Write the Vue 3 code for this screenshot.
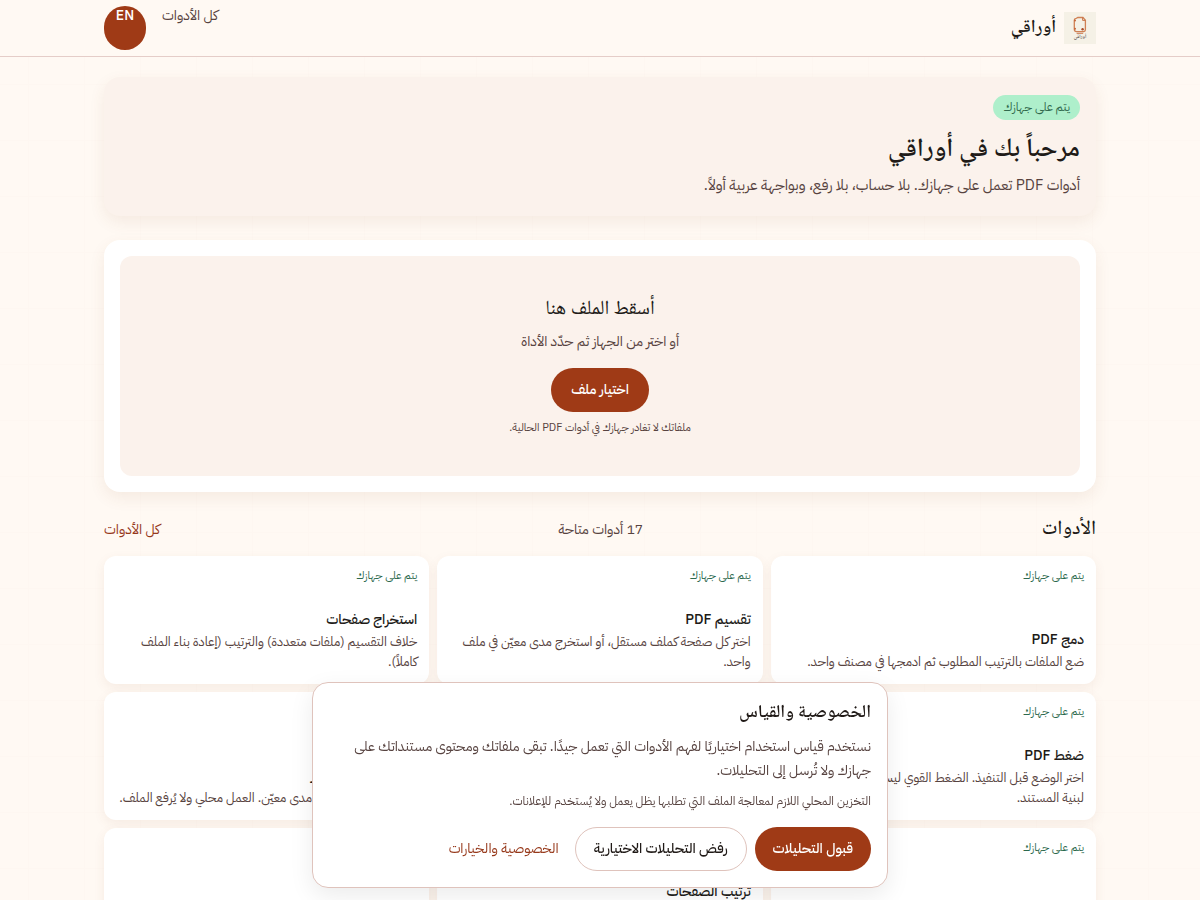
<script setup>
const local = 'يتم على جهازك'
const tools = [
  { title: 'دمج PDF', text: 'ضع الملفات بالترتيب المطلوب ثم ادمجها في مصنف واحد.' },
  { title: 'تقسيم PDF', text: 'اختر كل صفحة كملف مستقل، أو استخرج مدى معيّن في ملف\nواحد.' },
  { title: 'استخراج صفحات', text: 'خلاف التقسيم (ملفات متعددة) والترتيب (إعادة بناء الملف\nكاملاً).' },
  { title: 'ضغط PDF', text: 'اختر الوضع قبل التنفيذ. الضغط القوي ليس مناسباً دائماً\nلبنية المستند.' },
  { title: 'تدوير الصفحات', text: 'دوّر كل الصفحات أو صفحات محددة.' },
  { title: 'تحويل PDF إلى صور', text: 'كل الصفحات كاملة أو مدى معيّن. العمل محلي ولا يُرفع الملف.' },
  { title: 'صور إلى PDF', text: 'اجمع الصور في ملف واحد.' },
  { title: 'ترتيب الصفحات', text: 'أعد ترتيب صفحات الملف كما تريد\nثم احفظه.' },
  { title: 'حذف صفحات', text: 'احذف الصفحات غير المطلوبة.' }
]
</script>

<template>
  <div class="page" dir="rtl" lang="ar">
    <header class="top">
      <div class="wrap bar">
        <a class="brand" href="#">
          <svg class="logo" viewBox="0 0 32 32" aria-hidden="true">
            <rect width="32" height="32" fill="#f5f1e6" />
            <path d="M19 5.5h-5.2c-.8 0-1 .7-1.6.8-1.3.1-1.9.7-1.9 1.8v9.2c0 1.6.7 2.3 2.2 2.3h7.2c1.1 0 1.7-.6 1.7-1.8V8.2z" fill="none" stroke="#d08154" stroke-width="1.3" />
            <path d="M18.6 5.3v3.1h3M12.6 21.3h6.6" fill="none" stroke="#c9774c" stroke-width="1" />
            <circle cx="18.6" cy="17.3" r="1.2" fill="#a94a28" />
            <circle cx="11" cy="8.5" r="1" fill="#c46537" />
            <circle cx="11" cy="16.8" r="1" fill="#c46537" />
            <text x="16" y="26" text-anchor="middle" font-size="5" font-weight="600" fill="#554e49">أوراقي</text>
          </svg>
          <span>أوراقي</span>
        </a>
        <nav class="nav">
          <a class="navlink" href="#tools">كل الأدوات</a>
          <button class="lang" type="button" lang="en">EN</button>
        </nav>
      </div>
    </header>

    <main class="wrap main">
      <section class="hero">
        <span class="badge">{{ local }}</span>
        <h1>مرحباً بك في أوراقي</h1>
        <p>أدوات PDF تعمل على جهازك. بلا حساب، بلا رفع، وبواجهة عربية أولاً.</p>
      </section>

      <section class="upload">
        <div class="drop">
          <h2>أسقط الملف هنا</h2>
          <p>أو اختر من الجهاز ثم حدّد الأداة</p>
          <button class="primary pick" type="button">اختيار ملف</button>
          <small>ملفاتك لا تغادر جهازك في أدوات PDF الحالية.</small>
        </div>
      </section>

      <section id="tools">
        <div class="heading">
          <h2>الأدوات</h2>
          <span>17 أدوات متاحة</span>
          <a href="#tools">كل الأدوات</a>
        </div>
        <div class="grid">
          <a v-for="tool in tools" :key="tool.title" class="card" href="#">
            <span class="local">{{ local }}</span>
            <h3>{{ tool.title }}</h3>
            <p>{{ tool.text }}</p>
          </a>
        </div>
      </section>
    </main>

    <section class="consent" role="dialog" aria-labelledby="consent-title">
      <h2 id="consent-title">الخصوصية والقياس</h2>
      <p>نستخدم قياس استخدام اختياريًا لفهم الأدوات التي تعمل جيدًا. تبقى ملفاتك ومحتوى مستنداتك على جهازك ولا تُرسل إلى التحليلات.</p>
      <small>التخزين المحلي اللازم لمعالجة الملف التي تطلبها يظل يعمل ولا يُستخدم للإعلانات.</small>
      <div class="actions">
        <button class="primary" type="button">قبول التحليلات</button>
        <button class="outline" type="button">رفض التحليلات الاختيارية</button>
        <a href="#">الخصوصية والخيارات</a>
      </div>
    </section>
  </div>
</template>

<style>
html, body { overflow: hidden; height: 100%; }
</style>

<style scoped>
* { box-sizing: border-box; }
.page {
  height: 100vh;
  overflow: hidden;
  color: #201a17;
  font-family: "IBM Plex Sans Arabic", "Noto Sans Arabic", Roboto, sans-serif;
  font-size: 14px;
  line-height: 20px;
  background-color: #fff9f3;
  background-image:
    repeating-linear-gradient(90deg, transparent 0 28px, #fef7f1 28px 29px, transparent 29px 56px),
    repeating-linear-gradient(180deg, transparent 0 28px, #fef7f1 28px 29px, transparent 29px 56px);
}
h1, h2, h3, p { margin: 0; font-weight: 500; }
h1, h2, .brand span { font-family: "Noto Naskh Arabic", "DejaVu Sans", serif; }
p { font-weight: 400; }
a { color: #96381a; text-decoration: none; }
button { font: inherit; cursor: pointer; }
.wrap { max-width: 1024px; margin: 0 auto; padding: 0 16px; }
.top { background: #fff9f3; border-bottom: 1px solid #e5cdc8; }
.bar { display: flex; align-items: center; justify-content: space-between; height: 56px; }
.brand { display: flex; align-items: center; gap: 8px; color: #201a17; font-size: 18px; line-height: 28px; font-weight: 600; }
.logo { width: 32px; height: 32px; display: block; font-family: "Noto Naskh Arabic", serif; }
.nav { display: flex; gap: 16px; }
.navlink { color: #574340; height: 44px; }
.lang { display: flex; justify-content: center; align-items: flex-start; width: 42px; height: 44px; border: 0; border-radius: 22px; padding: 0; background: #9f3a16; color: #fff; font-weight: 500; }
.main { display: flex; flex-direction: column; gap: 24px; padding-top: 20px; }
.hero { padding: 18px 16px; border-radius: 16px; background: #fbf2ec; box-shadow: 0 6px 16px #8c503016; }
.badge { display: inline-block; height: 25px; padding: 0 10px; border-radius: 13px; background: #aeefcb; color: #31694d; font-size: 12px; line-height: 24px; vertical-align: top; }
.hero h1 { margin-top: 8px; font-size: 26px; line-height: 44px; font-weight: 600; }
.hero p { color: #574340; font-size: 15px; line-height: 26px; }
.upload { padding: 16px; border-radius: 16px; background: #fff; box-shadow: 0 6px 16px #8c503016; }
.drop { display: flex; flex-direction: column; align-items: center; min-height: 220px; padding: 36px 16px; border-radius: 12px; background: #fbf2ec; color: #574340; }
.drop h2 { color: #201a17; font-size: 20px; line-height: 36px; font-weight: 400; }
.drop p { margin-top: 4px; }
.drop small { margin-top: 6px; font-size: 11px; line-height: 20px; }
.primary { height: 44px; padding: 0 18px; border: 0; border-radius: 22px; background: #9f3a16; color: #fff; font-weight: 500; }
.pick { margin-top: 16px; padding: 0 20px; }
.heading { display: flex; align-items: center; justify-content: space-between; height: 28px; margin-bottom: 12px; color: #574340; }
.heading h2 { color: #201a17; font-size: 20px; line-height: 28px; }
.grid { display: grid; grid-template-columns: repeat(3, 1fr); gap: 8px; }
.card { display: flex; flex-direction: column; height: 128px; padding: 12px; border-radius: 12px; background: #fff; color: #574340; box-shadow: 0 4px 12px #8c503014; }
.local { color: #2c694d; font-size: 11px; line-height: 16px; }
.card h3 { margin-top: auto; color: #201a17; font-size: 14px; line-height: 24px; }
.card p { font-size: 13px; white-space: pre-line; }
.consent { position: fixed; bottom: 12px; left: 50%; width: 576px; max-width: calc(100% - 32px); transform: translateX(-50%); padding: 16px; border: 1px solid #dfc3bc; border-radius: 16px; background: #fff; color: #574340; box-shadow: 0 8px 24px #00000014; }
.consent h2 { color: #201a17; font-size: 18px; line-height: 28px; font-weight: 600; }
.consent p { margin-top: 8px; line-height: 24px; }
.consent small { display: block; margin-top: 8px; font-size: 12px; line-height: 20px; }
.actions { display: flex; align-items: center; gap: 8px; margin-top: 16px; }
.outline { height: 44px; padding: 0 18px; border: 1px solid #dfc3bc; border-radius: 22px; background: #fff; color: #201a17; font-weight: 500; }
.actions a { padding: 0 8px; }
</style>
